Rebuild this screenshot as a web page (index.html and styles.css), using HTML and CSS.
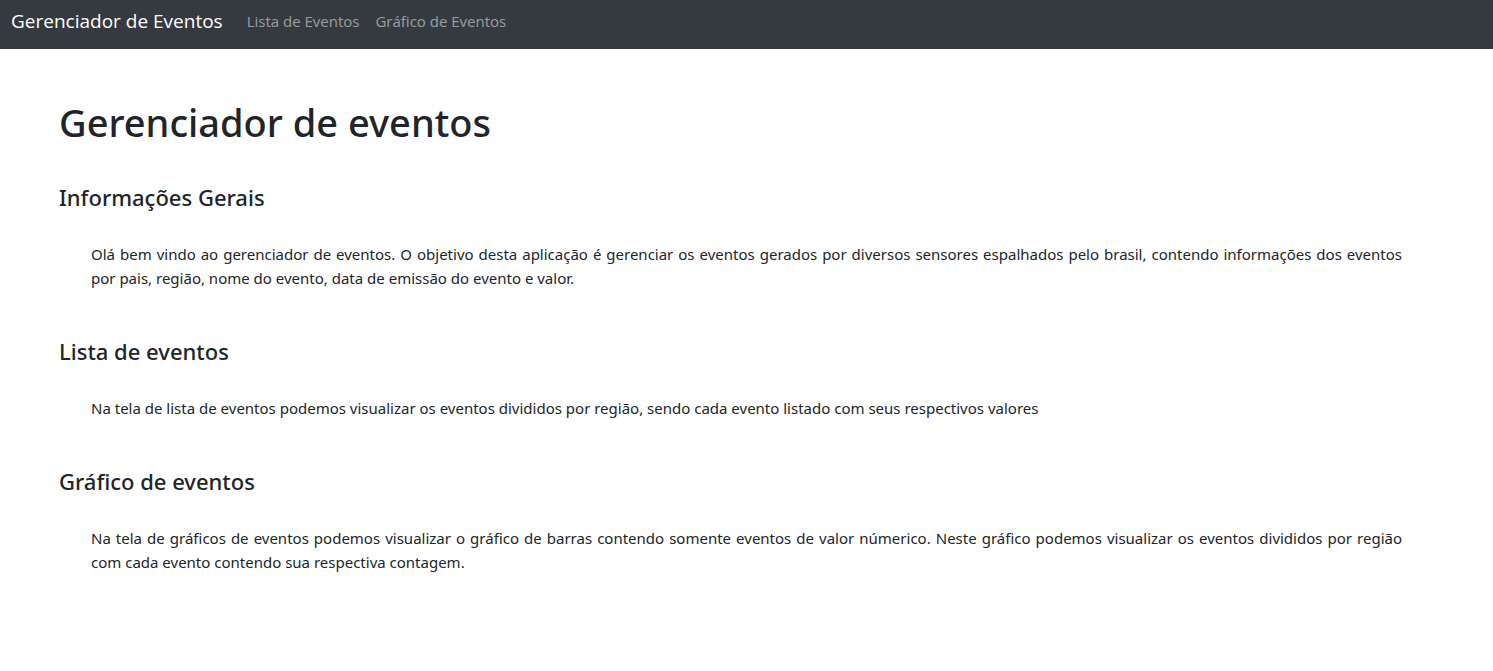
FILE: index.html
```html
<!DOCTYPE html>
<html lang="pt-BR">
<head>
<meta charset="utf-8">
<meta name="viewport" content="width=device-width, initial-scale=1">
<title>Gerenciador de Eventos</title>
<link rel="stylesheet" href="styles.css">
</head>
<body>
<nav class="navbar">
  <a class="brand" href="#">Gerenciador de Eventos</a>
  <ul class="nav-list">
    <li><a class="nav-link" href="#lista">Lista de Eventos</a></li>
    <li><a class="nav-link" href="#grafico">Gráfico de Eventos</a></li>
  </ul>
</nav>
<main class="content">
  <h1 class="title">Gerenciador de eventos</h1>
  <section class="section">
    <h2 class="heading">Informações Gerais</h2>
    <p class="text">Olá bem vindo ao gerenciador de eventos. O objetivo desta aplicação é gerenciar os eventos gerados por diversos sensores espalhados pelo brasil, contendo informações dos eventos por pais, região, nome do evento, data de emissão do evento e valor.</p>
  </section>
  <section class="section" id="lista">
    <h2 class="heading">Lista de eventos</h2>
    <p class="text">Na tela de lista de eventos podemos visualizar os eventos divididos por região, sendo cada evento listado com seus respectivos valores</p>
  </section>
  <section class="section" id="grafico">
    <h2 class="heading">Gráfico de eventos</h2>
    <p class="text">Na tela de gráficos de eventos podemos visualizar o gráfico de barras contendo somente eventos de valor númerico. Neste gráfico podemos visualizar os eventos divididos por região com cada evento contendo sua respectiva contagem.</p>
  </section>
</main>
</body>
</html>
```
FILE: styles.css
```css
* {
  box-sizing: border-box;
}

body {
  margin: 0;
  background: #fff;
  color: #212529;
  font-family: "Noto Sans", "Open Sans", sans-serif;
  font-size: 15px;
  line-height: 24px;
}

.navbar {
  display: flex;
  align-items: center;
  gap: 24px;
  padding: 1px 11px 8px;
  background: #343a40;
}

.brand {
  color: #fff;
  font-family: "Open Sans", "Noto Sans", sans-serif;
  font-size: 19px;
  line-height: 40px;
  text-decoration: none;
}

.nav-list {
  display: flex;
  gap: 16px;
  margin: 0;
  padding: 0;
  font-family: "Open Sans", "Noto Sans", sans-serif;
  list-style: none;
}

.nav-link {
  color: rgba(255, 255, 255, 0.5);
  text-decoration: none;
}

.content {
  padding: 48px 59px;
}

.title {
  margin: 0 0 34px;
  font-size: 38px;
  font-weight: 500;
  line-height: 50px;
}

.heading {
  margin: 0 0 29px;
  font-size: 22px;
  font-weight: 500;
  line-height: 32px;
}

.section {
  margin-bottom: 45px;
}

.text {
  margin: 0;
  padding: 0 32px;
  text-align: justify;
}
```
